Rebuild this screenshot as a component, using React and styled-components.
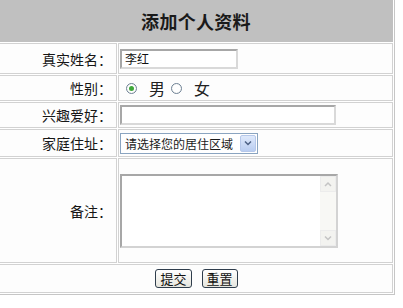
import styled, { createGlobalStyle } from "styled-components";

const GlobalStyle = createGlobalStyle`
  html, body {
    margin: 0;
    padding: 0;
    background: #ffffff;
    overflow: hidden;
  }
  body {
    font-family: "Noto Sans CJK SC", "Liberation Sans", sans-serif;
    color: #222;
  }
`;

const Table = styled.div`
  display: grid;
  grid-template-columns: 118px 275px;
  grid-template-rows: 42px 31px 26px 26px 28px 105px 29px;
  gap: 1px;
  width: fit-content;
  margin: -2px 0 0 -3px;
  padding: 1px;
  border: 1px solid #c6c6c6;
  background: #ffffff;
`;

const Cell = styled.div`
  box-sizing: border-box;
  border: 1px solid #d2d2d2;
  background: #fdfdfd;
  display: flex;
  align-items: center;
`;

const Caption = styled(Cell)`
  grid-column: 1 / 3;
  justify-content: center;
  background: #c0c0c0;
  border-color: #c0c0c0;
  font-size: 18px;
  font-weight: 700;
  color: #1a1a1a;
  letter-spacing: 0.3px;
`;

const Label = styled(Cell)`
  justify-content: flex-end;
  padding-right: 4px;
  font-size: 14px;
  color: #161616;
`;

const Field = styled(Cell)`
  padding-left: 1px;
  justify-content: ${(p) => (p.$center ? "center" : "flex-start")};
  grid-column: ${(p) => (p.$full ? "1 / 3" : "auto")};
  gap: ${(p) => (p.$center ? "10px" : "0")};
`;

const TextBox = styled.div`
  box-sizing: border-box;
  width: ${(p) => p.$w}px;
  height: 20px;
  border: 2px solid;
  border-color: #a7a7a7 #d9d9d9 #d9d9d9 #a7a7a7;
  background: #fff;
  font-size: 12px;
  line-height: 16px;
  padding-left: 3px;
  color: #111;
`;

const RadioGroup = styled.div`
  display: flex;
  align-items: center;
  padding-left: 6px;
  font-size: 16px;
  color: #222;
`;

const Radio = styled.span`
  box-sizing: border-box;
  width: 11px;
  height: 11px;
  border-radius: 50%;
  border: 1px solid #6f8296;
  background: radial-gradient(circle, #ffffff 55%, #e4e4dc 100%);
  display: inline-flex;
  align-items: center;
  justify-content: center;
  margin-right: 12px;
  &::after {
    content: "";
    width: 5px;
    height: 5px;
    border-radius: 50%;
    background: ${(p) => (p.$on ? "#3fa83a" : "transparent")};
  }
`;

const Choice = styled.span`
  margin-right: ${(p) => (p.$last ? "0" : "6px")};
`;

const Select = styled.div`
  box-sizing: border-box;
  width: 138px;
  height: 21px;
  border: 1px solid #8aa4c0;
  background: #fff;
  display: flex;
  align-items: center;
  justify-content: space-between;
  padding: 1px;
  font-size: 12px;
  color: #1a1a1a;
`;

const SelectText = styled.span`
  padding-left: 3px;
`;

const DropButton = styled.span`
  width: 16px;
  height: 17px;
  background: linear-gradient(#dfe9fb, #b9cdf1);
  border: 1px solid #b6c8ea;
  box-sizing: border-box;
  border-radius: 2px;
  display: flex;
  align-items: center;
  justify-content: center;
`;

const TextArea = styled.div`
  box-sizing: border-box;
  width: 218px;
  height: 74px;
  border: 2px solid;
  border-color: #a7a7a7 #d3d3d3 #d3d3d3 #a7a7a7;
  background: #fff;
  display: flex;
  justify-content: flex-end;
`;

const ScrollBar = styled.div`
  width: 16px;
  background: #f8f8f5;
  display: flex;
  flex-direction: column;
  justify-content: space-between;
`;

const ScrollArrow = styled.span`
  height: 16px;
  border: 1px solid #ececec;
  box-sizing: border-box;
  background: #f3f3f0;
  display: flex;
  align-items: center;
  justify-content: center;
`;

const Button = styled.button`
  box-sizing: border-box;
  height: 19px;
  padding: 0 4px;
  border: 1px solid #2f3d4c;
  border-radius: 3px;
  background: linear-gradient(#ffffff, #e6e6de);
  font-family: "Noto Sans CJK SC", sans-serif;
  font-size: 13px;
  line-height: 15px;
  color: #111;
`;

const Chevron = ({ up, color = "#4d6185" }) => (
  <svg width="8" height="6" viewBox="0 0 8 6">
    <path
      d={up ? "M1 5 L4 2 L7 5" : "M1 1.5 L4 4.5 L7 1.5"}
      fill="none"
      stroke={color}
      strokeWidth="1.5"
    />
  </svg>
);

export default function App() {
  return (
    <>
      <GlobalStyle />
      <Table>
        <Caption>添加个人资料</Caption>

        <Label>真实姓名：</Label>
        <Field>
          <TextBox $w={118}>李红</TextBox>
        </Field>

        <Label>性别：</Label>
        <Field>
          <RadioGroup>
            <Radio $on />
            <Choice>男</Choice>
            <Radio />
            <Choice $last>女</Choice>
          </RadioGroup>
        </Field>

        <Label>兴趣爱好：</Label>
        <Field>
          <TextBox $w={216} />
        </Field>

        <Label>家庭住址：</Label>
        <Field>
          <Select>
            <SelectText>请选择您的居住区域</SelectText>
            <DropButton>
              <Chevron />
            </DropButton>
          </Select>
        </Field>

        <Label>备注：</Label>
        <Field>
          <TextArea>
            <ScrollBar>
              <ScrollArrow>
                <Chevron up color="#c4c4c4" />
              </ScrollArrow>
              <ScrollArrow>
                <Chevron color="#c4c4c4" />
              </ScrollArrow>
            </ScrollBar>
          </TextArea>
        </Field>

        <Field $full $center>
          <Button>提交</Button>
          <Button>重置</Button>
        </Field>
      </Table>
    </>
  );
}
